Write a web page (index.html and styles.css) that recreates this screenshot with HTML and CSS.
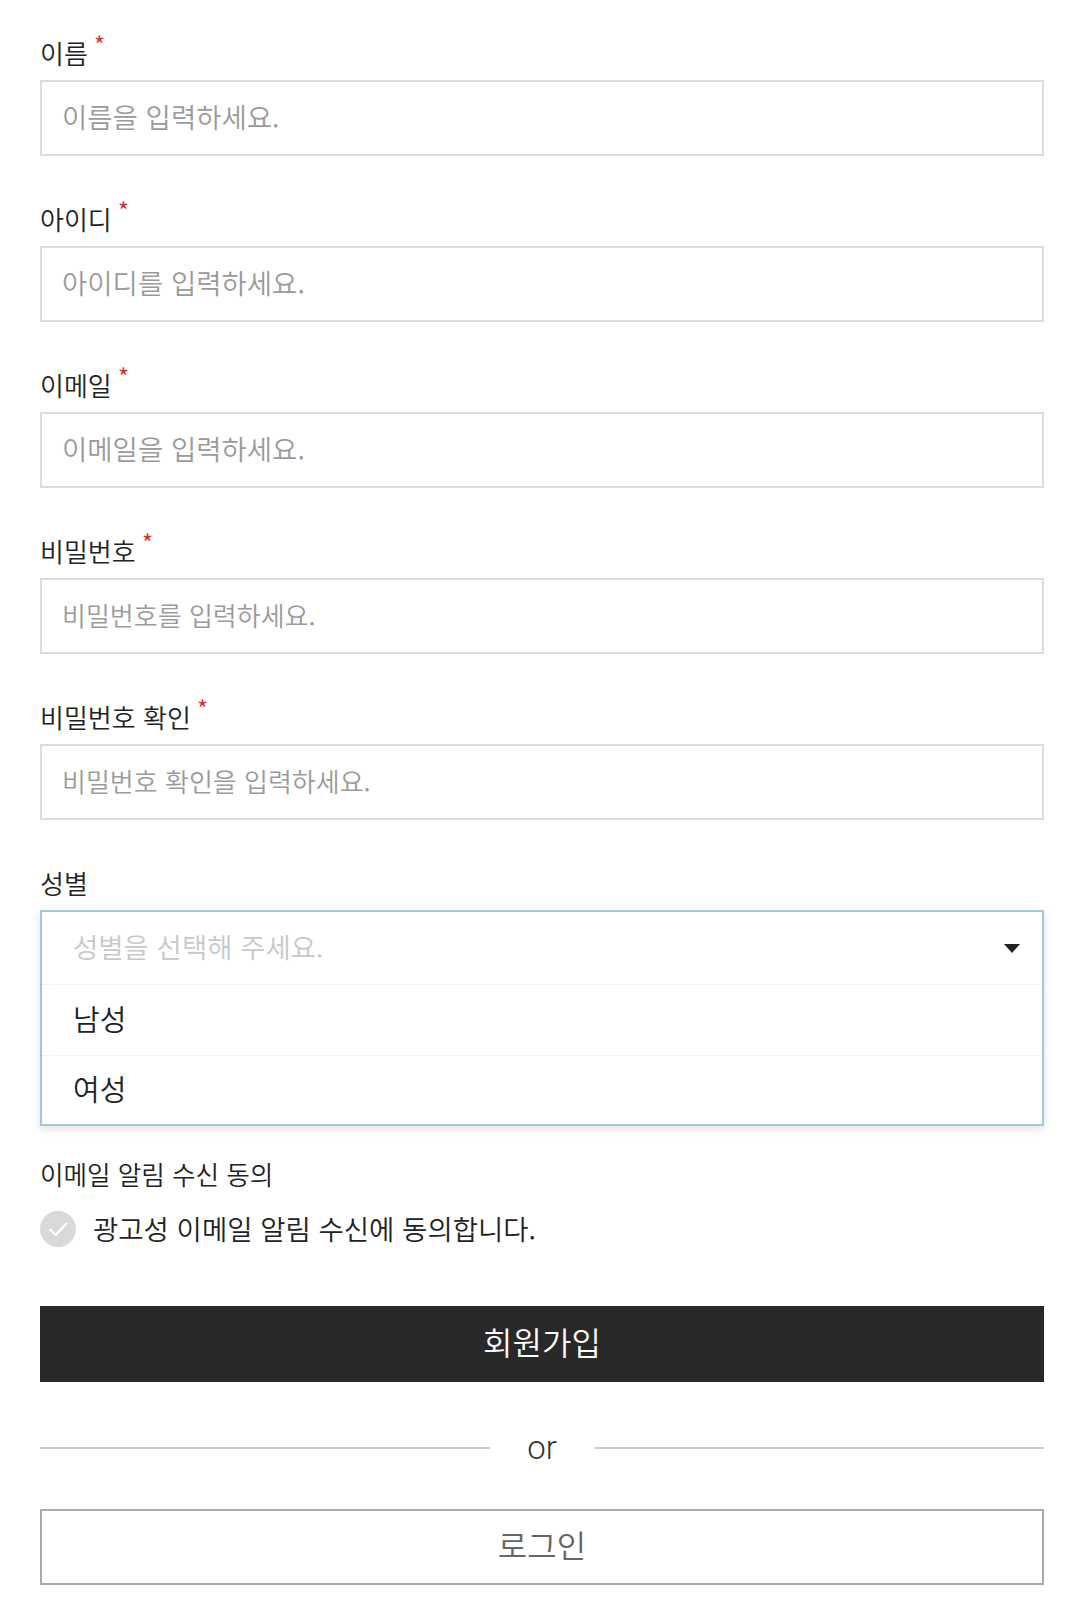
FILE: index.html
```html
<!DOCTYPE html>
<html lang="ko">
<head>
<meta charset="utf-8">
<title>회원가입</title>
<link rel="stylesheet" href="styles.css">
</head>
<body>
<form class="signup">
  <div class="field">
    <label class="label">이름<span class="req">*</span></label>
    <input class="input" type="text" placeholder="이름을 입력하세요.">
  </div>
  <div class="field">
    <label class="label">아이디<span class="req">*</span></label>
    <input class="input" type="text" placeholder="아이디를 입력하세요.">
  </div>
  <div class="field">
    <label class="label">이메일<span class="req">*</span></label>
    <input class="input" type="text" placeholder="이메일을 입력하세요.">
  </div>
  <div class="field">
    <label class="label">비밀번호<span class="req">*</span></label>
    <input class="input input-password" type="password" placeholder="비밀번호를 입력하세요.">
  </div>
  <div class="field">
    <label class="label">비밀번호 확인<span class="req">*</span></label>
    <input class="input input-password" type="password" placeholder="비밀번호 확인을 입력하세요.">
  </div>
  <div class="field field-select">
    <label class="label">성별</label>
    <div class="select">
      <div class="select-head">
        <span class="select-placeholder">성별을 선택해 주세요.</span>
        <span class="caret"></span>
      </div>
      <div class="option">남성</div>
      <div class="option">여성</div>
    </div>
  </div>
  <div class="agree">
    <div class="agree-title">이메일 알림 수신 동의</div>
    <div class="agree-row">
      <span class="check">
        <svg width="36" height="36" viewBox="0 0 36 36"><circle cx="18" cy="18" r="18" fill="#d9d9d9"/><path d="M10 18.5 L15.5 24 L26.5 12.5" fill="none" stroke="#fff" stroke-width="2" stroke-linecap="round" stroke-linejoin="round"/></svg>
      </span>
      <span class="agree-text">광고성 이메일 알림 수신에 동의합니다.</span>
    </div>
  </div>
  <button class="btn-primary" type="button">회원가입</button>
  <div class="divider"><span class="line"></span><span class="or">or</span><span class="line"></span></div>
  <button class="btn-outline" type="button">로그인</button>
</form>
</body>
</html>
```

FILE: styles.css
```css
* { box-sizing: border-box; }
html, body { margin: 0; padding: 0; background: #fff; }
body {
  font-family: Roboto, "Noto Sans CJK KR", sans-serif;
  color: #222;
}
.signup {
  width: 1004px;
  margin-left: 40px;
  padding-top: 35px;
  display: flex;
  flex-direction: column;
}
.field {
  display: flex;
  flex-direction: column;
  margin-bottom: 45px;
}
.label {
  font-family: "Noto Sans CJK KR", sans-serif;
  font-weight: 350;
  font-size: 26px;
  line-height: 36px;
  height: 36px;
  color: #222;
  margin-bottom: 9px;
}
.req {
  color: #d32f2f;
  font-size: 25px;
  vertical-align: top;
  position: relative;
  top: -3px;
  margin-left: 6px;
  line-height: 24px;
}
.input {
  height: 76px;
  border: 2px solid #dcdcdc;
  padding: 0 20px 4px;
  font-family: "Noto Sans CJK KR", sans-serif;
  font-weight: 350;
  font-size: 27.5px;
  color: #222;
  outline: none;
  width: 100%;
  background: #fff;
}
.input-password { font-size: 26px; }
.input::placeholder { color: #9a9a9a; }
.select {
  border: 2px solid #a3c8dc;
  box-shadow: 0 3px 8px rgba(0, 0, 0, 0.12);
  background: #fff;
}
.select-head {
  height: 73px;
  display: flex;
  align-items: center;
  justify-content: space-between;
  padding: 0 22px 0 31px;
  border-bottom: 1px solid #f3f3f3;
}
.select-placeholder {
  font-family: "Noto Sans CJK KR", sans-serif;
  font-weight: 350;
  font-size: 27.5px;
  color: #c8c8c8;
  padding-bottom: 4px;
}
.caret {
  width: 0;
  height: 0;
  border-left: 8px solid transparent;
  border-right: 8px solid transparent;
  border-top: 9px solid #222;
}
.option {
  height: 70px;
  display: flex;
  align-items: center;
  padding: 0 0 4px 31px;
  font-family: "Noto Sans CJK KR", sans-serif;
  font-weight: 350;
  font-size: 29px;
  color: #222;
}
.option + .option { border-top: 1px solid #f3f3f3; height: 69px; }
.field-select { margin-bottom: 30px; }
.agree-title {
  font-family: "Noto Sans CJK KR", sans-serif;
  font-weight: 350;
  font-size: 25.6px;
  line-height: 36px;
  color: #222;
}
.agree-row {
  display: flex;
  align-items: center;
  gap: 17px;
  margin-top: 16px;
}
.check { display: flex; width: 36px; height: 36px; }
.agree-text {
  font-family: "Noto Sans CJK KR", sans-serif;
  font-weight: 350;
  font-size: 27.5px;
  color: #222;
  padding-bottom: 2px;
}
.btn-primary {
  margin-top: 56px;
  height: 76px;
  width: 100%;
  border: none;
  padding: 0 0 6px;
  background: #292929;
  color: #fff;
  font-family: "Noto Sans CJK KR", sans-serif;
  font-weight: 350;
  font-size: 32px;
}
.divider {
  display: flex;
  align-items: center;
  height: 50px;
  margin-top: 41px;
}
.line { flex: 1; height: 2px; background: #cccccc; }
.or {
  width: 105px;
  text-align: center;
  font-family: Roboto, sans-serif;
  font-weight: 300;
  font-size: 33px;
  color: #333;
  line-height: 50px;
}
.btn-outline {
  margin-top: 36px;
  height: 76px;
  width: 100%;
  border: 2px solid #aaaaaa;
  padding: 0 0 6px;
  background: #fff;
  color: #666;
  font-family: "Noto Sans CJK KR", sans-serif;
  font-weight: 350;
  font-size: 32px;
}
```
